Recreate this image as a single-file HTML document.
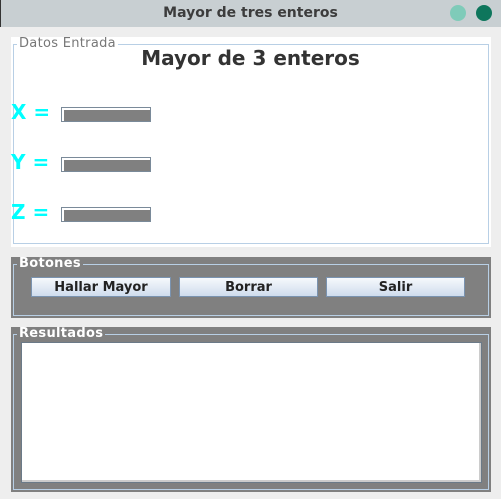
<!DOCTYPE html>
<html><head><style>
*{margin:0;padding:0;box-sizing:border-box}
body{width:501px;height:499px;background:#eeeeee;position:relative;overflow:hidden;font-family:"DejaVu Sans","Liberation Sans",sans-serif}
.a{position:absolute}
.tb{left:0;top:0;width:501px;height:27px;background:#c8cfd2;border-left:1px solid #333}
.tt{left:0;width:501px;top:5px;text-align:center;font-size:14px;font-weight:bold;color:#3c3c3c}
.lbl{font-size:13px;padding:0 2px;line-height:14px;letter-spacing:0.3px}
.field{width:90px;height:15px;background:#808080;border:1px solid #7a8a99;box-shadow:inset 2px 2px 0 #fff}
.xyz{font-size:20px;font-weight:bold;color:#00ffff;line-height:20px}
.btn{top:277px;height:20px;background:linear-gradient(#f6f9fc,#cfdced);border:1px solid #7a93b0;font-size:13px;font-weight:bold;color:#222;text-align:center;line-height:20px}
</style></head><body>
<div class="a tb"></div>
<div class="a tt">Mayor de tres enteros</div>
<div class="a" style="left:450px;top:5px;width:16px;height:16px;border-radius:50%;background:#7fcbb9"></div>
<div class="a" style="left:476px;top:5px;width:16px;height:16px;border-radius:50%;background:#0e765c"></div>

<div class="a" style="left:11px;top:37px;width:480px;height:210px;background:#fff"></div>
<div class="a" style="left:13px;top:44px;width:476px;height:200px;border:1px solid #b8cfe5"></div>
<div class="a lbl" style="left:17px;top:37px;background:#fff;color:#777">Datos Entrada</div>
<div class="a" style="left:0;width:501px;top:46px;text-align:center;font-size:20px;font-weight:bold;color:#333">Mayor de 3 enteros</div>
<div class="a xyz" style="left:11px;top:102px">X =</div>
<div class="a xyz" style="left:11px;top:152px">Y =</div>
<div class="a xyz" style="left:11px;top:202px">Z =</div>
<div class="a field" style="left:61px;top:107px"></div>
<div class="a field" style="left:61px;top:157px"></div>
<div class="a field" style="left:61px;top:207px"></div>

<div class="a" style="left:11px;top:257px;width:480px;height:61px;background:#808080"></div>
<div class="a" style="left:13px;top:264px;width:476px;height:52px;border:1px solid #b8cfe5"></div>
<div class="a lbl" style="left:17px;top:257px;background:#808080;color:#fff;font-weight:bold">Botones</div>
<div class="a btn" style="left:31px;width:140px">Hallar Mayor</div>
<div class="a btn" style="left:179px;width:139px">Borrar</div>
<div class="a btn" style="left:326px;width:139px">Salir</div>

<div class="a" style="left:11px;top:327px;width:480px;height:165px;background:#808080"></div>
<div class="a" style="left:13px;top:334px;width:476px;height:156px;border:1px solid #b8cfe5"></div>
<div class="a lbl" style="left:17px;top:327px;background:#808080;color:#fff;font-weight:bold">Resultados</div>
<div class="a" style="left:21px;top:342px;width:461px;height:141px;background:#fff;border:1px solid #6b7a88;box-shadow:inset -2px -2px 0 #ccc"></div>
</body></html>
